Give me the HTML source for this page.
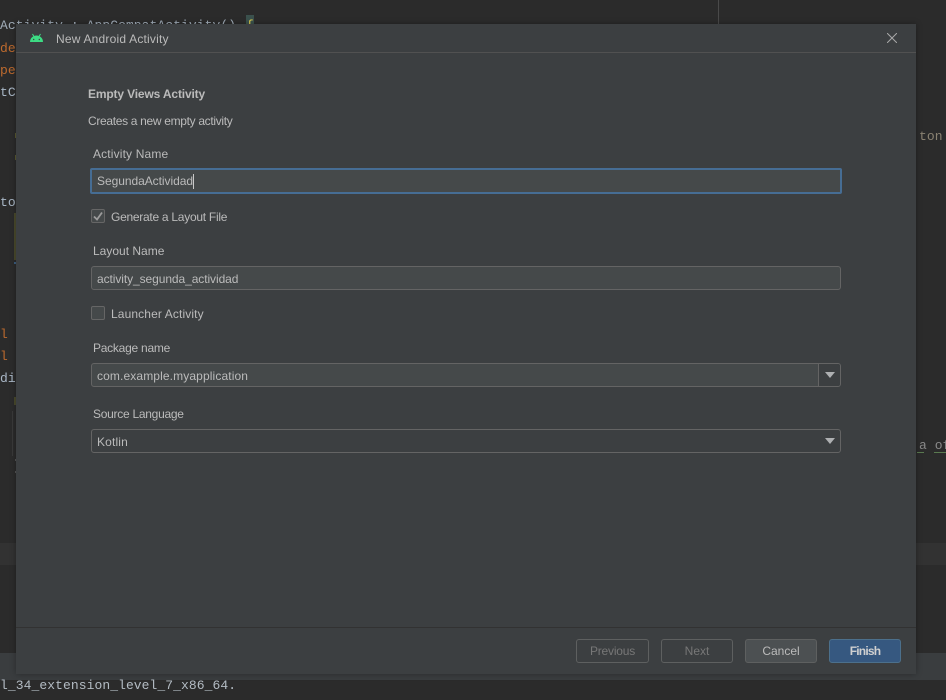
<!DOCTYPE html>
<html><head><meta charset="utf-8"><style>
html,body{margin:0;padding:0;background:#2b2b2b;width:946px;height:700px;overflow:hidden}
body{position:relative;font-family:"Liberation Sans",sans-serif;font-size:12px;color:#bbb}
.a{position:absolute;white-space:nowrap}
.t{line-height:16px;height:16px}
.m{font-family:"Liberation Mono",monospace;font-size:13px;letter-spacing:.07px;line-height:18px;color:#a9b7c6}
.o{color:#bd6a2e}
.f{box-sizing:border-box;border:1px solid #646464;background:#45494a;border-radius:3px}
.b{box-sizing:border-box;height:24px;width:72px;top:639px;border:1px solid #5e6060;border-radius:3px;text-align:center;line-height:23px;color:#777}
</style></head><body>
<div class="a" style="left:0;top:543px;width:946px;height:22px;background:#323232"></div>
<div class="a" style="left:0;top:653px;width:946px;height:27px;background:#3a3d3f"></div>
<div class="a" style="left:718px;top:0;width:1px;height:24px;background:#4a4a4a"></div>
<div class="a m" style="left:0;top:17px;color:#a0acb8">Activity : AppCompatActivity()</div>
<div class="a" style="left:246px;top:15px;width:8px;height:12px;background:#3b514d"></div>
<div class="a m" style="left:246px;top:17px;color:#e8d44d">{</div>
<div class="a m o" style="left:0;top:40px">de</div>
<div class="a m o" style="left:0;top:62px">pe</div>
<div class="a m" style="left:0;top:84px">tC</div>
<div class="a" style="left:15px;top:133px;width:1px;height:5px;background:#5a5a30"></div>
<div class="a" style="left:15px;top:155px;width:1px;height:5px;background:#5a5a30"></div>
<div class="a m" style="left:0;top:194px">to</div>
<div class="a" style="left:14px;top:213px;width:2px;height:47px;background:#4a4a2c"></div>
<div class="a" style="left:14px;top:262px;width:2px;height:2px;background:#3d5f80"></div>
<div class="a m o" style="left:0;top:326px">l</div>
<div class="a m o" style="left:0;top:348px">l</div>
<div class="a m" style="left:0;top:370px">di</div>
<div class="a" style="left:14px;top:397px;width:2px;height:8px;background:#4a4a2c"></div>
<div class="a" style="left:12px;top:411px;width:1px;height:45px;background:#3a3a3a"></div>
<div class="a" style="left:15px;top:459px;width:1px;height:2px;background:#555"></div>
<div class="a" style="left:15px;top:471px;width:1px;height:2px;background:#555"></div>
<div class="a m" style="left:919px;top:128px;color:#8a8272">ton</div>
<div class="a m" style="left:919px;top:437px;color:#8a8a8a">a of</div>
<div class="a" style="left:917px;top:452px;width:7px;height:1px;background:#5a7a50"></div>
<div class="a" style="left:934px;top:452px;width:12px;height:1px;background:#5a7a50"></div>
<div class="a m" style="left:0;top:677px;color:#b4bcc4">l_34_extension_level_7_x86_64.</div>

<div class="a" style="left:16px;top:24px;width:900px;height:650px;background:#3c3f41;box-shadow:0 0 6px rgba(0,0,0,.3)"></div>
<div class="a" style="left:16px;top:52px;width:900px;height:1px;background:#515151"></div>
<div class="a" style="left:16px;top:627px;width:900px;height:1px;background:#323232"></div>

<svg class="a" style="left:30px;top:33px" width="13" height="10" viewBox="0 0 13 10"><path d="M0 9a6.2 6.2 0 0 1 13 0z" fill="#3ddc84"/><path d="M2.500 1l1.800 3M10.500 1L8.700 4" stroke="#3ddc84" stroke-width="1"/><circle cx="3.700" cy="6.500" r=".7" fill="#3c3f41"/><circle cx="9.300" cy="6.500" r=".7" fill="#3c3f41"/></svg>
<div class="a t" style="left:56px;top:31px;letter-spacing:.2px">New Android Activity</div>
<svg class="a" style="left:887px;top:33px" width="10" height="10" viewBox="0 0 10 10"><path d="M0 0l10 10M10 0L0 10" stroke="#a8a8a8" stroke-width="1" fill="none"/></svg>

<div class="a t" style="left:88px;top:86px;font-weight:bold;letter-spacing:-.15px">Empty Views Activity</div>
<div class="a t" style="left:88px;top:113px;letter-spacing:-.32px">Creates a new empty activity</div>

<div class="a t" style="left:93px;top:146px;letter-spacing:.15px">Activity Name</div>
<div class="a" style="box-sizing:border-box;left:90px;top:168px;width:752px;height:26px;border:2px solid #466d94;border-radius:2px;background:#45494a"></div>
<div class="a t" style="left:97px;top:173px;letter-spacing:-.05px">SegundaActividad</div>
<div class="a" style="left:193px;top:174px;width:1px;height:15px;background:#c8c8c8"></div>

<div class="a" style="box-sizing:border-box;left:91px;top:209px;width:14px;height:14px;border:1px solid #666;border-radius:2px;background:#45494a"></div>
<svg class="a" style="left:91px;top:209px" width="14" height="14" viewBox="0 0 14 14"><path d="M3 7.500l3 3 5-7" stroke="#9c9c9c" stroke-width="1.800" fill="none"/></svg>
<div class="a t" style="left:111px;top:209px;letter-spacing:-.27px">Generate a Layout File</div>

<div class="a t" style="left:93px;top:243px">Layout Name</div>
<div class="a f" style="left:91px;top:266px;width:750px;height:24px"></div>
<div class="a t" style="left:97px;top:271px;letter-spacing:-.08px">activity_segunda_actividad</div>

<div class="a" style="box-sizing:border-box;left:91px;top:306px;width:14px;height:14px;border:1px solid #666;border-radius:2px;background:#45494a"></div>
<div class="a t" style="left:111px;top:306px;letter-spacing:.12px">Launcher Activity</div>

<div class="a t" style="left:93px;top:340px;letter-spacing:-.25px">Package name</div>
<div class="a f" style="left:91px;top:363px;width:750px;height:24px"></div>
<div class="a" style="left:818px;top:364px;width:22px;height:22px;background:#3c3f41;border-left:1px solid #646464;box-sizing:border-box;border-radius:0 2px 2px 0"></div>
<svg class="a" style="left:825px;top:372px" width="10" height="6"><path d="M0 0h10L5 6z" fill="#aeb0b2"/></svg>
<div class="a t" style="left:97px;top:368px;letter-spacing:.12px">com.example.myapplication</div>

<div class="a t" style="left:93px;top:406px;letter-spacing:-.27px">Source Language</div>
<div class="a f" style="left:91px;top:429px;width:750px;height:24px;background:#3c3f41"></div>
<svg class="a" style="left:825px;top:438px" width="10" height="6"><path d="M0 0h10L5 6z" fill="#aeb0b2"/></svg>
<div class="a t" style="left:97px;top:434px;letter-spacing:.15px">Kotlin</div>

<div class="a b" style="left:576px;width:73px;letter-spacing:-.2px">Previous</div>
<div class="a b" style="left:661px">Next</div>
<div class="a b" style="left:745px;background:#4c5052;color:#bbb">Cancel</div>
<div class="a b" style="left:829px;background:#365880;border-color:#4c708c;color:#d0d0d0;font-weight:bold;letter-spacing:-.8px">Finish</div>
</body></html>
